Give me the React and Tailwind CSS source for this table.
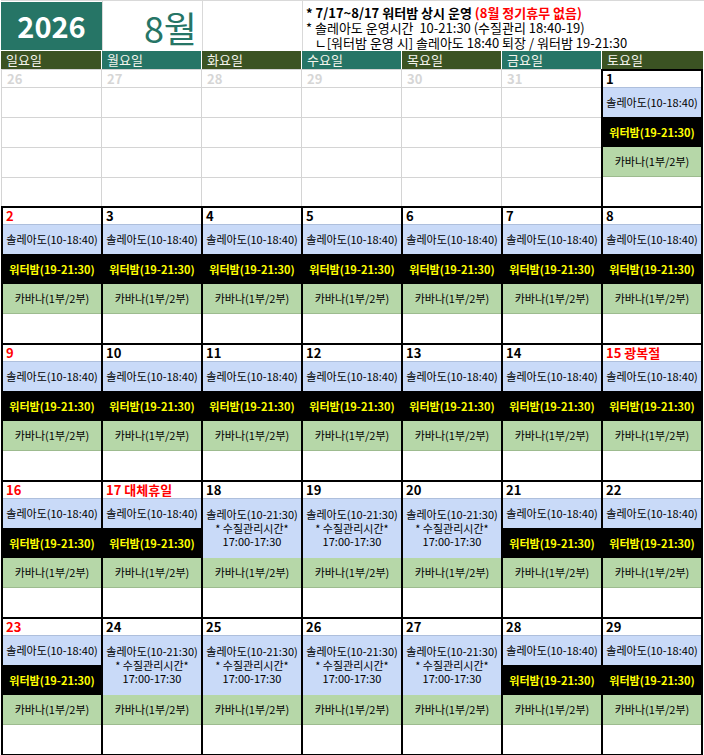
import clsx from "clsx";

const heads = [
  ["일요일", "bg-[#3b5323]"],
  ["월요일", "bg-[#267566]"],
  ["화요일", "bg-[#3b5323]"],
  ["수요일", "bg-[#267566]"],
  ["목요일", "bg-[#3b5323]"],
  ["금요일", "bg-[#267566]"],
  ["토요일", "bg-[#3b5323]"],
];

const weeks = [
  [
    { d: "26", out: true },
    { d: "27", out: true },
    { d: "28", out: true },
    { d: "29", out: true },
    { d: "30", out: true },
    { d: "31", out: true },
    { d: "1" },
  ],
  [
    { d: "2", red: true },
    { d: "3" },
    { d: "4" },
    { d: "5" },
    { d: "6" },
    { d: "7" },
    { d: "8" },
  ],
  [
    { d: "9", red: true },
    { d: "10" },
    { d: "11" },
    { d: "12" },
    { d: "13" },
    { d: "14" },
    { d: "15 광복절", red: true },
  ],
  [
    { d: "16", red: true },
    { d: "17 대체휴일", red: true },
    { d: "18", wq: true },
    { d: "19", wq: true },
    { d: "20", wq: true },
    { d: "21" },
    { d: "22" },
  ],
  [
    { d: "23", red: true },
    { d: "24", wq: true },
    { d: "25", wq: true },
    { d: "26", wq: true },
    { d: "27", wq: true },
    { d: "28" },
    { d: "29" },
  ],
];

const OutCell = ({ day }) => (
  <div className="flex flex-col border-l border-t border-[#d4d4d4]">
    <div className="h-[17px] pl-[5px] text-[13px] font-bold leading-[17px] text-[#d6d6d6]">
      {day.d}
    </div>
    <div className="h-[30px] border-t border-[#d4d4d4]" />
    <div className="h-[30px] border-t border-[#d4d4d4]" />
    <div className="h-[30px] border-t border-[#d4d4d4]" />
    <div className="h-[29px] border-t border-[#d4d4d4]" />
  </div>
);

const DayCell = ({ day, col, last }) => {
  if (day.out) return <OutCell day={day} />;
  return (
    <div
      className={clsx(
        "flex flex-col border-l-2 border-t-2 border-black",
        col === 6 && "border-r-2",
        last && "border-b-2"
      )}
    >
      <div
        className={clsx(
          "h-[16px] pl-[3px] text-[13px] font-bold leading-[16px] whitespace-nowrap",
          day.red ? "text-[#ff0000]" : "text-black"
        )}
      >
        {day.d}
      </div>
      {day.wq ? (
        <div className="flex h-[60px] flex-col items-center justify-center border-t border-[#aebfdc] bg-[#c9daf8] text-[11px] leading-[13.5px] text-black whitespace-nowrap">
          <span>솔레아도(10-21:30)</span>
          <span>* 수질관리시간*</span>
          <span>17:00-17:30</span>
        </div>
      ) : (
        <>
          <div className="flex h-[30px] items-center justify-center border-t border-[#aebfdc] bg-[#c9daf8] text-[11px] text-black whitespace-nowrap">
            솔레아도(10-18:40)
          </div>
          <div className="flex h-[30px] items-center justify-center bg-black text-[11px] font-bold text-[#ffff00] whitespace-nowrap">
            워터밤(19-21:30)
          </div>
        </>
      )}
      <div className="flex h-[30px] items-center justify-center border-b border-[#9dbb8f] bg-[#b6d7a8] text-[11px] text-black whitespace-nowrap">
        카바나(1부/2부)
      </div>
      <div className="h-[29px]" />
    </div>
  );
};

export default function App() {
  return (
    <div className="h-[755px] w-[704px] overflow-hidden bg-white pl-px font-['Noto_Sans_CJK_KR',sans-serif]">
      <div className="flex h-[51px] border-t border-[#d9d9d9]">
        <div className="w-[102px] border-r border-[#d9d9d9] pt-px">
          <div className="flex h-[48px] items-center justify-center bg-[#267566] text-[29px] font-bold text-white">
            2026
          </div>
        </div>
        <div className="w-[100px] border-r border-[#d9d9d9] pr-[5px] pt-[2px] text-right text-[36px] leading-[48px] text-[#267566]">
          8월
        </div>
        <div className="w-[100px] border-r border-[#d9d9d9]" />
        <div className="flex-1 pl-[3px] pt-[4px] text-[13px] leading-[15px] text-black whitespace-pre">
          <div className="font-bold">
            * 7/17~8/17 워터밤 상시 운영 <span className="text-[#ff0000]">(8월 정기휴무 없음)</span>
          </div>
          <div>* 솔레아도 운영시간  10-21:30 (수질관리 18:40-19)</div>
          <div>   ㄴ[워터밤 운영 시] 솔레아도 18:40 퇴장 / 워터밤 19-21:30</div>
        </div>
      </div>
      <div className="grid h-[18px] grid-cols-[100px_100px_100px_100px_100px_100px_102px]">
        {heads.map(([name, bg], i) => (
          <div
            key={name}
            className={clsx(
              "pl-[5px] text-[13px] leading-[18px] text-[#f4f4ec]",
              bg,
              i > 0 && "border-l border-white"
            )}
          >
            {name}
          </div>
        ))}
      </div>
      {weeks.map((week, wi) => (
        <div
          key={wi}
          className="grid grid-cols-[100px_100px_100px_100px_100px_100px_102px]"
        >
          {week.map((day, ci) => (
            <DayCell
              key={ci}
              day={day}
              col={ci}
              last={wi === weeks.length - 1}
            />
          ))}
        </div>
      ))}
    </div>
  );
}
